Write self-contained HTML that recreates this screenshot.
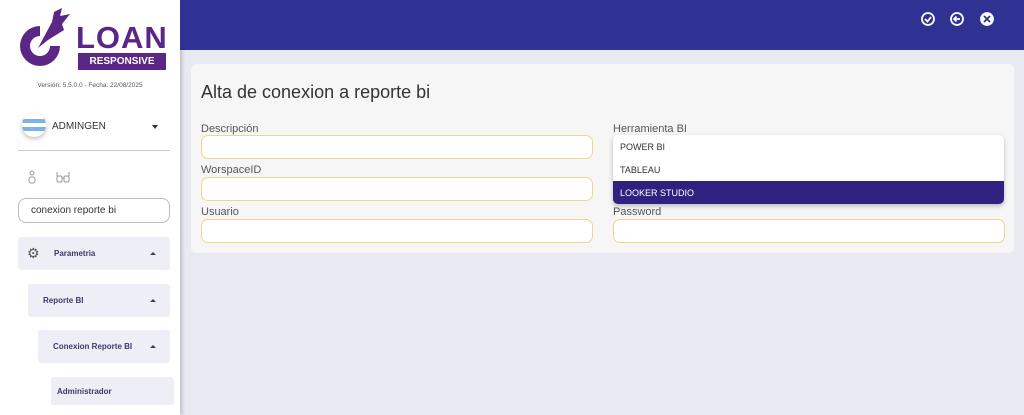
<!DOCTYPE html>
<html><head><meta charset="utf-8"><style>
*{box-sizing:border-box;margin:0;padding:0}
body{width:1024px;height:415px;overflow:hidden;background:#e9e9f1;font-family:"Liberation Sans",sans-serif;position:relative}
.side{position:absolute;left:0;top:0;width:180px;height:415px;background:#fff;box-shadow:2px 0 4px rgba(0,0,0,.2)}
.top{position:absolute;left:180px;top:0;right:0;height:50px;background:#2f3193}
.card{position:absolute;left:191px;top:64px;width:823px;height:189px;background:#f6f6f7;border-radius:5px}
.lbl{position:absolute;font-size:11px;color:#555}
.inp{position:absolute;height:24px;border:1px solid #efd68a;border-radius:7px;background:#fff}
.menu{position:absolute;background:#eeeef6;border-radius:3px;font-size:8px;font-weight:bold;color:#3a3a6e}
.ar{position:absolute;right:14px;top:15px;border:3px solid transparent;border-bottom:3px solid #3a3a6e;border-top:0}
</style></head><body>
<div class="side">
 <svg style="position:absolute;left:18px;top:8px" width="54" height="64" viewBox="0 0 54 64">
  <path d="M22 18 A20 20 0 1 0 42 38 L32 38 A10 10 0 1 1 22 28 Z" fill="#5b2787"/>
  <path d="M20 40 L34 14 L36 4 L44 0 L42 8 L52 6 L44 16 L46 22 L30 32 Z" fill="#5b2787"/>
 </svg>
 <div style="position:absolute;left:76px;top:20px;font-size:31px;font-weight:bold;color:#5b2787;letter-spacing:1px">LOAN</div>
 <div style="position:absolute;left:78px;top:53px;width:88px;height:17px;background:#5b2787;color:#fff;font-size:10px;font-weight:bold;text-align:center;line-height:17px">RESPONSIVE</div>
 <div style="position:absolute;left:0;width:180px;top:82px;text-align:center;font-size:6.5px;color:#555">Versión: 5.5.0.0 - Fecha: 22/08/2025</div>
 <div style="position:absolute;left:22px;top:113px;width:24px;height:24px;border-radius:50%;background:#fff;box-shadow:0 2px 5px rgba(0,0,0,.25);overflow:hidden"><div style="margin-top:6px;height:12px;background:linear-gradient(#7cb4e6 0 33%,#fff 33% 66%,#7cb4e6 66%)"></div></div>
 <div style="position:absolute;left:52px;top:121px;font-size:10px;color:#333">ADMINGEN</div>
 <div style="position:absolute;left:152px;top:125px;border:3px solid transparent;border-top:4px solid #333"></div>
 <div style="position:absolute;left:18px;top:150px;width:152px;height:1px;background:#ccc"></div>
 <svg style="position:absolute;left:27px;top:170px" width="46" height="14" viewBox="0 0 46 14" fill="none" stroke="#999" stroke-width="1">
  <circle cx="5" cy="3" r="2"/><rect x="2" y="7" width="6" height="6" rx="2"/>
  <rect x="30" y="6" width="5" height="6" rx="1.5"/><rect x="37" y="6" width="5" height="6" rx="1.5"/><path d="M35 8 H37 M30 6 V2 M42 6 V2"/>
 </svg>
 <div style="position:absolute;left:18px;top:198px;width:152px;height:25px;border:1px solid #bbb;border-radius:8px;font-size:10px;color:#333;padding:6px 12px">conexion reporte bi</div>
 <div class="menu" style="left:18px;top:237px;width:152px;height:33px"><span style="position:absolute;left:9px;top:8px;font-size:14px;font-weight:normal;color:#555">⚙</span><span style="position:absolute;left:36px;top:12px">Parametria</span><span class="ar"></span></div>
 <div class="menu" style="left:28px;top:284px;width:142px;height:33px"><span style="position:absolute;left:15px;top:12px">Reporte BI</span><span class="ar"></span></div>
 <div class="menu" style="left:38px;top:330px;width:132px;height:33px"><span style="position:absolute;left:15px;top:12px">Conexion Reporte BI</span><span class="ar"></span></div>
 <div class="menu" style="left:51px;top:377px;width:123px;height:28px"><span style="position:absolute;left:6px;top:10px">Administrador</span></div>
</div>
<div class="top">
 <svg style="position:absolute;left:740px;top:11px" width="75" height="16" viewBox="0 0 75 16" fill="none" stroke="#fff" stroke-width="1.8">
  <circle cx="8" cy="8" r="6"/><path d="M5 8 L7.5 10.5 L11 6"/>
  <circle cx="37" cy="8" r="6"/><path d="M40 8 H34 M36.5 5.5 L34 8 L36.5 10.5"/>
  <circle cx="67" cy="8" r="6" fill="#fff"/><path d="M64 5 L70 11 M70 5 L64 11" stroke="#2f3193"/>
 </svg>
</div>
<div class="card">
 <div style="position:absolute;left:10px;top:18px;font-size:18px;color:#333">Alta de conexion a reporte bi</div>
</div>
<div class="lbl" style="left:201px;top:123px">Descripción</div>
<div class="inp" style="left:201px;top:135px;width:392px"></div>
<div class="lbl" style="left:201px;top:164px">WorspaceID</div>
<div class="inp" style="left:201px;top:177px;width:392px"></div>
<div class="lbl" style="left:201px;top:206px">Usuario</div>
<div class="inp" style="left:201px;top:219px;width:392px"></div>
<div class="lbl" style="left:613px;top:123px">Herramienta BI</div>
<div class="lbl" style="left:613px;top:206px">Password</div>
<div class="inp" style="left:613px;top:219px;width:392px"></div>
<div style="position:absolute;left:613px;top:135px;width:391px;height:69px;background:#fff;border-radius:5px;box-shadow:0 2px 5px rgba(0,0,0,.25);font-size:9px;color:#333;overflow:hidden">
 <div style="height:23px;padding:7px 7px">POWER BI</div>
 <div style="height:23px;padding:7px 7px">TABLEAU</div>
 <div style="height:23px;padding:7px 7px;background:#2e2180;color:#fff">LOOKER STUDIO</div>
</div>
</body></html>
